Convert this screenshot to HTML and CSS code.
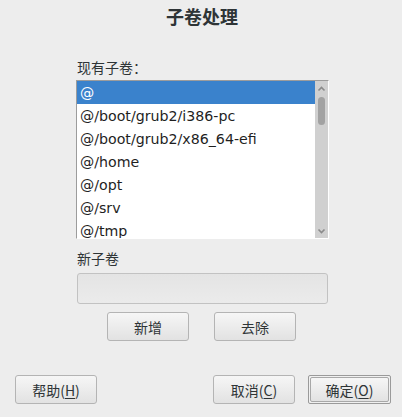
FILE: index.html
```html
<!DOCTYPE html>
<html>
<head>
<meta charset="utf-8">
<link rel="stylesheet" href="styles.css">
</head>
<body>
<div class="dialog">
  <div class="title">子卷处理</div>
  <div class="content">
    <div class="label first">现有子卷：</div>
    <div class="listbox">
      <div class="rows">
        <div class="row selected">@</div>
        <div class="row">@/boot/grub2/i386-pc</div>
        <div class="row">@/boot/grub2/x86_64-efi</div>
        <div class="row">@/home</div>
        <div class="row">@/opt</div>
        <div class="row">@/srv</div>
        <div class="row">@/tmp</div>
      </div>
      <div class="scrollbar">
        <svg class="arrow" width="9" height="6" viewBox="0 0 9 6"><path d="M1.5 4.5 L4.5 1.5 L7.5 4.5" fill="none" stroke="#8a8a8a" stroke-width="1.6"/></svg>
        <div class="thumb"></div>
        <div class="spacer"></div>
        <svg class="arrow" width="9" height="6" viewBox="0 0 9 6"><path d="M1.5 1.5 L4.5 4.5 L7.5 1.5" fill="none" stroke="#8a8a8a" stroke-width="1.6"/></svg>
      </div>
    </div>
    <div class="label second">新子卷</div>
    <div class="input"></div>
    <div class="actions">
      <button class="btn">新增</button>
      <button class="btn">去除</button>
    </div>
  </div>
  <div class="footer">
    <button class="btn">帮助(<u>H</u>)</button>
    <div class="right">
      <button class="btn">取消(<u>C</u>)</button>
      <div class="default"><button class="btn inner">确定(<u>O</u>)</button></div>
    </div>
  </div>
</div>
</body>
</html>
```
FILE: styles.css
```css
html, body {
  margin: 0;
  padding: 0;
  background: #ededed;
}
body {
  width: 402px;
  height: 417px;
  overflow: hidden;
  font-family: "DejaVu Sans", "Noto Sans CJK SC", sans-serif;
  color: #2e3436;
}
.dialog {
  display: flex;
  flex-direction: column;
}
.title {
  height: 32px;
  line-height: 32px;
  text-align: center;
  font-family: "Noto Sans CJK SC", sans-serif;
  font-weight: bold;
  font-size: 18px;
  padding-left: 2px;
}
.content {
  margin-left: 76px;
  width: 253px;
  display: flex;
  flex-direction: column;
}
.label {
  font-family: "Noto Sans CJK SC", sans-serif;
  font-size: 14px;
  height: 18px;
  line-height: 18px;
  padding-left: 1px;
}
.label.first { margin-top: 26px; }
.label.second { margin-top: 10px; }
.listbox {
  margin-top: 4px;
  height: 157px;
  border-top: 1px solid #9c9c9c;
  border-left: 1px solid #9c9c9c;
  border-right: 1px solid #ffffff;
  border-bottom: 1px solid #ffffff;
  background: #ffffff;
  display: flex;
  overflow: hidden;
}
.rows {
  flex: 1;
  overflow: hidden;
}
.row {
  height: 23px;
  line-height: 24px;
  font-size: 14.2px;
  padding-left: 3px;
  white-space: nowrap;
  color: #1f1f1f;
}
.row.selected {
  background: #3a82cc;
  color: #ffffff;
}
.scrollbar {
  width: 13px;
  background: #d0d0d0;
  display: flex;
  flex-direction: column;
  align-items: center;
  padding: 5px 0 4px;
  box-sizing: border-box;
}
.arrow { display: block; }
.thumb {
  margin-top: 5px;
  width: 7px;
  height: 28px;
  border-radius: 4px;
  background: #a2a2a2;
}
.spacer { flex: 1; }
.input {
  margin-top: 6px;
  margin-left: 1px;
  width: 249px;
  height: 29px;
  border: 1px solid #c2c2c2;
  border-radius: 3px;
  background: linear-gradient(#e4e4e4, #ebebeb);
}
.actions {
  margin-top: 8px;
  display: flex;
  gap: 25px;
  padding-left: 31px;
}
.btn {
  width: 82px;
  height: 29px;
  margin: 0;
  padding: 0;
  border: 1px solid #b4b4b4;
  border-radius: 3px;
  background: linear-gradient(#f6f6f6, #e2e2e2);
  font-family: "Noto Sans CJK SC", sans-serif;
  font-size: 14px;
  color: #2e3436;
  box-sizing: border-box;
}
.btn u { text-underline-offset: 2px; }
.footer {
  margin-top: 34px;
  display: flex;
  justify-content: space-between;
  padding: 0 11px 0 15px;
}
.right {
  display: flex;
  gap: 13px;
}
.default {
  width: 83px;
  height: 29px;
  box-sizing: border-box;
  border: 1px solid #9a9a9a;
  border-radius: 2px;
  padding: 1px;
  background: #f0f0f0;
}
.btn.inner {
  width: 79px;
  height: 25px;
  border-radius: 2px;
  border-color: #a8a8a8;
}
```
